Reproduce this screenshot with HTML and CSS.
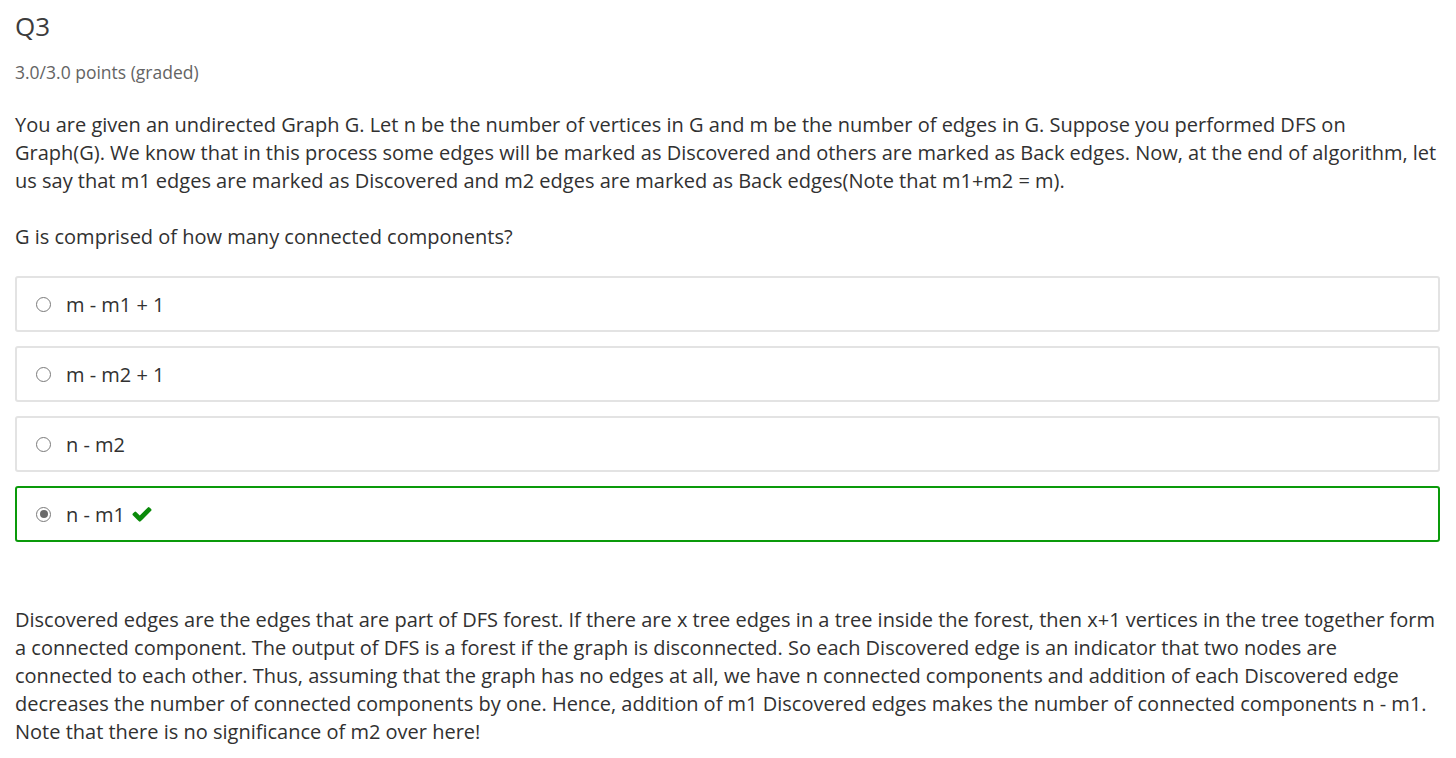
FILE: index.html
```html
<!DOCTYPE html>
<html>
<head>
<meta charset="utf-8">
<link rel="stylesheet" href="styles.css">
</head>
<body>
<div class="problem">
  <h3 class="title">Q3</h3>
  <div class="points">3.0/3.0 points (graded)</div>
  <p class="text">You are given an undirected Graph G. Let n be the number of vertices in G and m be the number of edges in G. Suppose you performed DFS on Graph(G). We know that in this process some edges will be marked as Discovered and others are marked as Back edges. Now, at the end of algorithm, let us say that m1 edges are marked as Discovered and m2 edges are marked as Back edges(Note that m1+m2 = m).</p>
  <p class="text">G is comprised of how many connected components?</p>
  <div class="choices">
    <label class="choice"><span class="radio"></span><span class="label">m - m1 + 1</span></label>
    <label class="choice"><span class="radio"></span><span class="label">m - m2 + 1</span></label>
    <label class="choice"><span class="radio"></span><span class="label">n - m2</span></label>
    <label class="choice correct"><span class="radio checked"></span><span class="label">n - m1</span>
      <svg class="check" width="22" height="22" viewBox="0 0 1792 1792"><path fill="#0a8a0a" d="M1671 566q0 40-28 68l-724 724-136 136q-28 28-68 28t-68-28l-136-136-362-362q-28-28-28-68t28-68l136-136q28-28 68-28t68 28l294 295 656-657q28-28 68-28t68 28l136 136q28 28 28 68z"/></svg>
    </label>
  </div>
  <p class="text solution">Discovered edges are the edges that are part of DFS forest. If there are x tree edges in a tree inside the forest, then x+1 vertices in the tree together form a connected component. The output of DFS is a forest if the graph is disconnected. So each Discovered edge is an indicator that two nodes are connected to each other. Thus, assuming that the graph has no edges at all, we have n connected components and addition of each Discovered edge decreases the number of connected components by one. Hence, addition of m1 Discovered edges makes the number of connected components n - m1. Note that there is no significance of m2 over here!</p>
</div>
</body>
</html>
```
FILE: styles.css
```css
html, body {
  margin: 0;
  padding: 0;
  background: #fff;
}
body {
  font-family: "Open Sans", "Liberation Sans", sans-serif;
  color: #313131;
}
.problem {
  padding: 0 16px 0 15px;
}
.title {
  margin: 0;
  padding-top: 8px;
  font-size: 26px;
  font-weight: 400;
  line-height: 36px;
  color: #3c3c3c;
}
.points {
  margin-top: 17px;
  font-size: 17.5px;
  line-height: 22px;
  color: #646464;
}
.text {
  margin: 0 3px 0 0;
  font-size: 20px;
  line-height: 28px;
}
.points + .text {
  margin-top: 28px;
}
.text + .text {
  margin-top: 28px;
}
.choices {
  margin-top: 25px;
  display: flex;
  flex-direction: column;
  gap: 14px;
}
.choice {
  display: flex;
  align-items: center;
  height: 52px;
  padding: 0 18px 0 19px;
  border: 2px solid #e3e3e3;
  border-radius: 3px;
  font-size: 20px;
}
.choice.correct {
  border-color: #0a9a0a;
  height: 52px;
}
.radio {
  width: 15px;
  height: 15px;
  border: 1px solid #7a7a7a;
  border-radius: 50%;
  margin-right: 15px;
  box-sizing: border-box;
  flex: none;
  position: relative;
  background: #fff;
}
.radio.checked::after {
  content: "";
  position: absolute;
  left: 2.5px;
  top: 2.5px;
  width: 8px;
  height: 8px;
  border-radius: 50%;
  background: #6b6b6b;
}
.check {
  margin-left: 6px;
}
.solution {
  margin-top: 64px;
}
```
